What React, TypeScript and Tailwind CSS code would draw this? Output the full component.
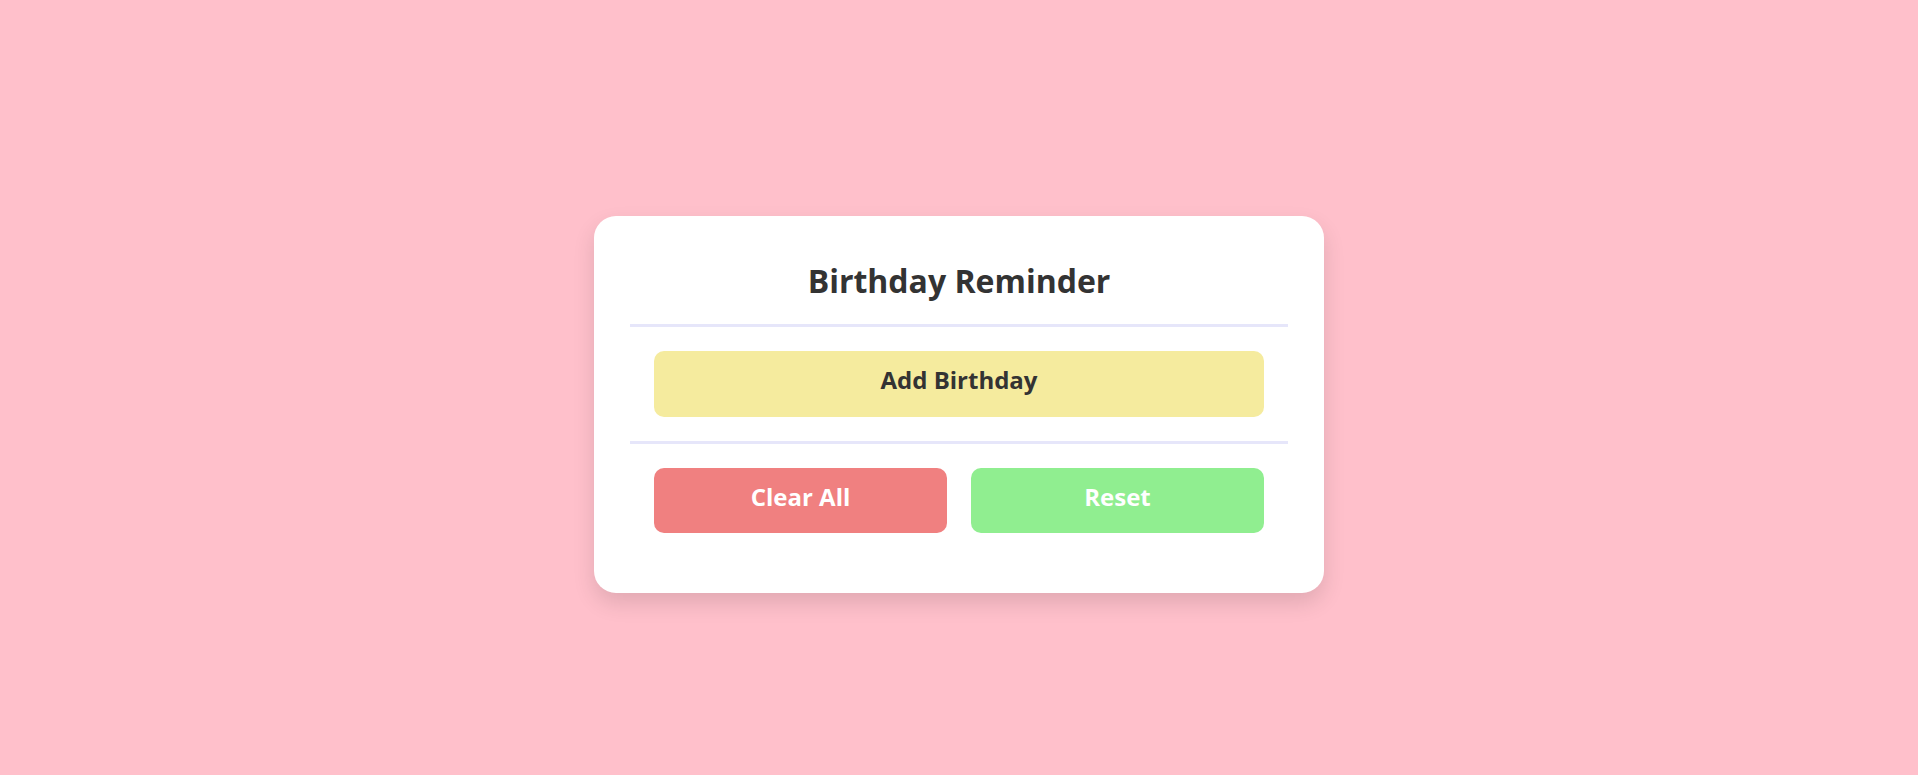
export default function App() {
  return (
    <div className="min-h-screen bg-[#ffc0cb] flex justify-center pt-[216px] font-['Open_Sans',sans-serif]">
      <div className="w-[730px] h-[377px] bg-white rounded-[22px] shadow-[0_10px_22px_rgba(0,0,0,0.12)] px-9 pt-[41px] flex flex-col">
        <h1 className="text-[32px] leading-[48px] font-bold text-[#333] text-center">Birthday Reminder</h1>
        <div className="mt-[19px] h-[3px] bg-[#e6e6fa]"></div>
        <div className="px-6 py-6">
          <button className="w-full h-[66px] rounded-[10px] bg-[#f5eb9e] text-[24px] font-bold text-[#333] pb-2">
            Add Birthday
          </button>
        </div>
        <div className="h-[3px] bg-[#e6e6fa]"></div>
        <div className="px-6 pt-6 grid grid-cols-2 gap-6">
          <button className="h-[65px] rounded-[10px] bg-[#f08080] text-[24px] font-bold text-white pb-2">
            Clear All
          </button>
          <button className="h-[65px] rounded-[10px] bg-[#90ee90] text-[24px] font-bold text-white pb-2">
            Reset
          </button>
        </div>
      </div>
    </div>
  )
}
